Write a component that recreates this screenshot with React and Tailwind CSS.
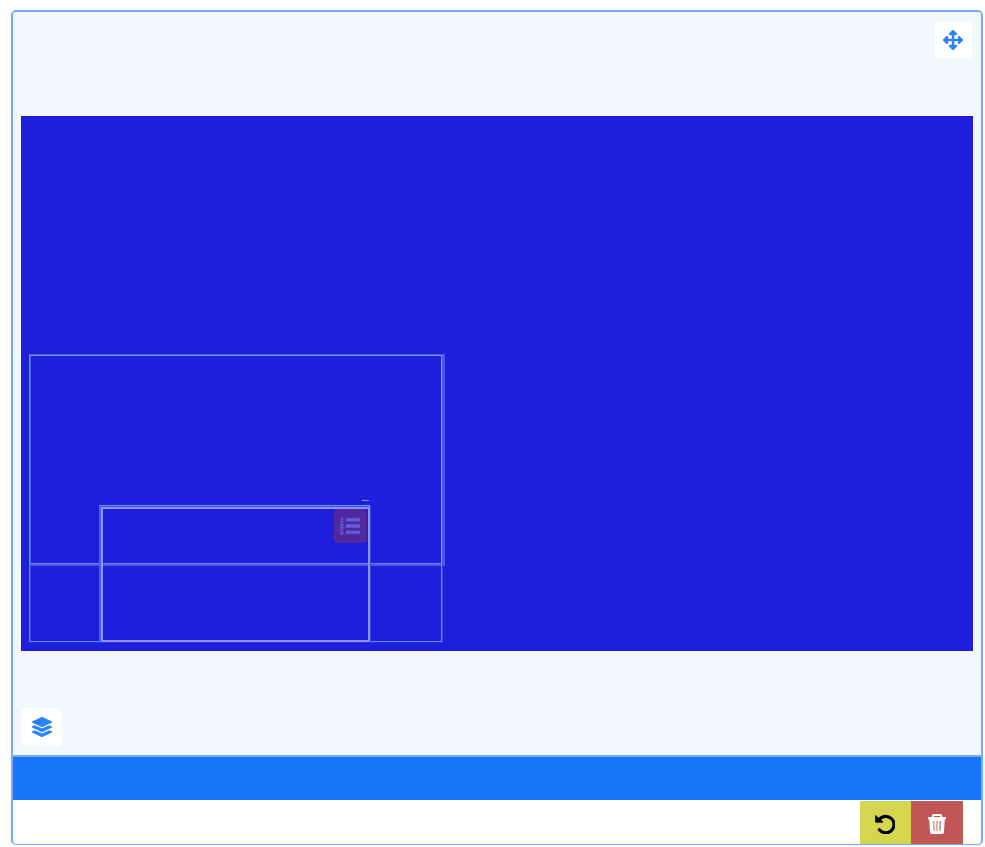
import { FaArrowsAlt, FaLayerGroup, FaListOl } from "react-icons/fa";

function TrashIcon() {
  return (
    <svg width="18" height="20" viewBox="0 0 18 20" fill="none">
      <path d="M4.7 4V2.4Q4.7 1 6.1 1H11.9Q13.3 1 13.3 2.4V4" stroke="white" strokeWidth="1.8" />
      <rect x="0" y="3" width="18" height="2.4" rx="0.8" fill="white" />
      <path d="M1.2 5H16.8L16 18Q15.9 20 14 20H4Q2.1 20 2 18Z" fill="white" />
      <path d="M5.7 7L6 16.8" stroke="#c97f7c" strokeWidth="1.2" />
      <path d="M9 7V16.8" stroke="#d98a4a" strokeWidth="1.3" />
      <path d="M12.3 7L12 16.8" stroke="#ab5898" strokeWidth="1.2" />
    </svg>
  );
}

function UndoIcon() {
  return (
    <svg width="20" height="20" viewBox="0 0 20 20" fill="none">
      <path d="M4.2 5.6A8.2 8.2 0 1 1 4.3 15.6" stroke="black" strokeWidth="3.1" strokeLinecap="round" />
      <path d="M0.4 1.2L7.8 7.4V8.4H0.8Q0.2 8.4 0.2 7.8V1.4Z" fill="black" stroke="black" strokeWidth="0.4" />
    </svg>
  );
}

function NumberedListIcon() {
  return (
    <svg width="20" height="20" viewBox="0 0 20 20">
      <FaListOl size={20} stroke="currentColor" strokeWidth="6" />
      <path d="M6 2.4H19.8V5.2H6ZM6 8.6H19.8V11.4H6ZM6 14.8H19.8V17.6H6Z" fill="currentColor" />
    </svg>
  );
}

function Canvas() {
  return (
    <div className="relative h-[535px] w-[952px] bg-[#1e1edc]">
      <div className="absolute left-[8px] top-[238px] h-[212px] w-[416px] border-b-3 border-l-2 border-r-4 border-t border-[#4f58df] border-l-[#4667e8]" />
      <div className="absolute left-[9px] top-[448px] h-[79px] w-[413px] border border-t-0 border-[#3048e0] border-b-[#2630de]" />
      <div className="absolute left-[8px] top-[239px] h-[209px] w-[413px] border border-[#699ef5]" />
      <div className="absolute left-[8px] top-[447px] h-[79px] w-[413px] border border-[#6289f2]" />
      <div className="absolute left-[78px] top-[389px] h-[137px] w-[272px] border-2 border-b border-[#3549e0] border-l-[#4961e4]" />
      <div className="absolute left-[80px] top-[391px] h-[135px] w-[269px] border-2 border-[#9292eb]" />
      <div className="absolute left-[78px] top-[389px] h-[137px] w-[271px] border-r border-t border-[#6f9af3]" />
      <div className="absolute left-[341px] top-[384px] h-px w-[7px] bg-[#9292eb]" />
      <div className="absolute left-[313px] top-[393px] flex h-[34px] w-[33px] items-center justify-center rounded bg-[#50289f] pr-px text-[#6060dc]">
        <NumberedListIcon />
      </div>
    </div>
  );
}

export default function App() {
  return (
    <div className="h-[847px] w-[985px] bg-[#fdfdfd] pl-[11px] pt-[10px]">
      <div className="flex h-[835px] w-[972px] flex-col overflow-hidden rounded-[5px] border-2 border-b border-[#74abfa] bg-white">
        <div className="flex h-[745px] shrink-0 flex-col border-b-2 border-[#74abf5] bg-[#f3f8ff] pl-[8px]">
          <div className="flex h-[104px] items-start justify-end pr-[9px] pt-[9px]">
            <button className="flex h-[38px] w-[37px] items-center justify-center rounded-sm bg-white pr-px text-[#2b83fa]">
              <FaArrowsAlt className="size-5 stroke-current" strokeWidth="8" />
            </button>
          </div>
          <Canvas />
          <button className="ml-px mt-[57px] flex h-[38px] w-[40px] items-center justify-center rounded-sm bg-white text-[#2b83fa]">
            <FaLayerGroup className="size-5" />
          </button>
        </div>
        <div className="h-[43px] shrink-0 bg-[#1976f8]" />
        <div className="flex h-[44px] shrink-0 justify-end pr-[18px] pt-px">
          <button className="flex h-[43px] w-[51px] items-center justify-center bg-[#d3d64e] pr-px pt-[2px]">
            <UndoIcon />
          </button>
          <button className="flex h-[43px] w-[52px] items-center justify-center bg-[#c15656] pt-[2px]">
            <TrashIcon />
          </button>
        </div>
      </div>
    </div>
  );
}
